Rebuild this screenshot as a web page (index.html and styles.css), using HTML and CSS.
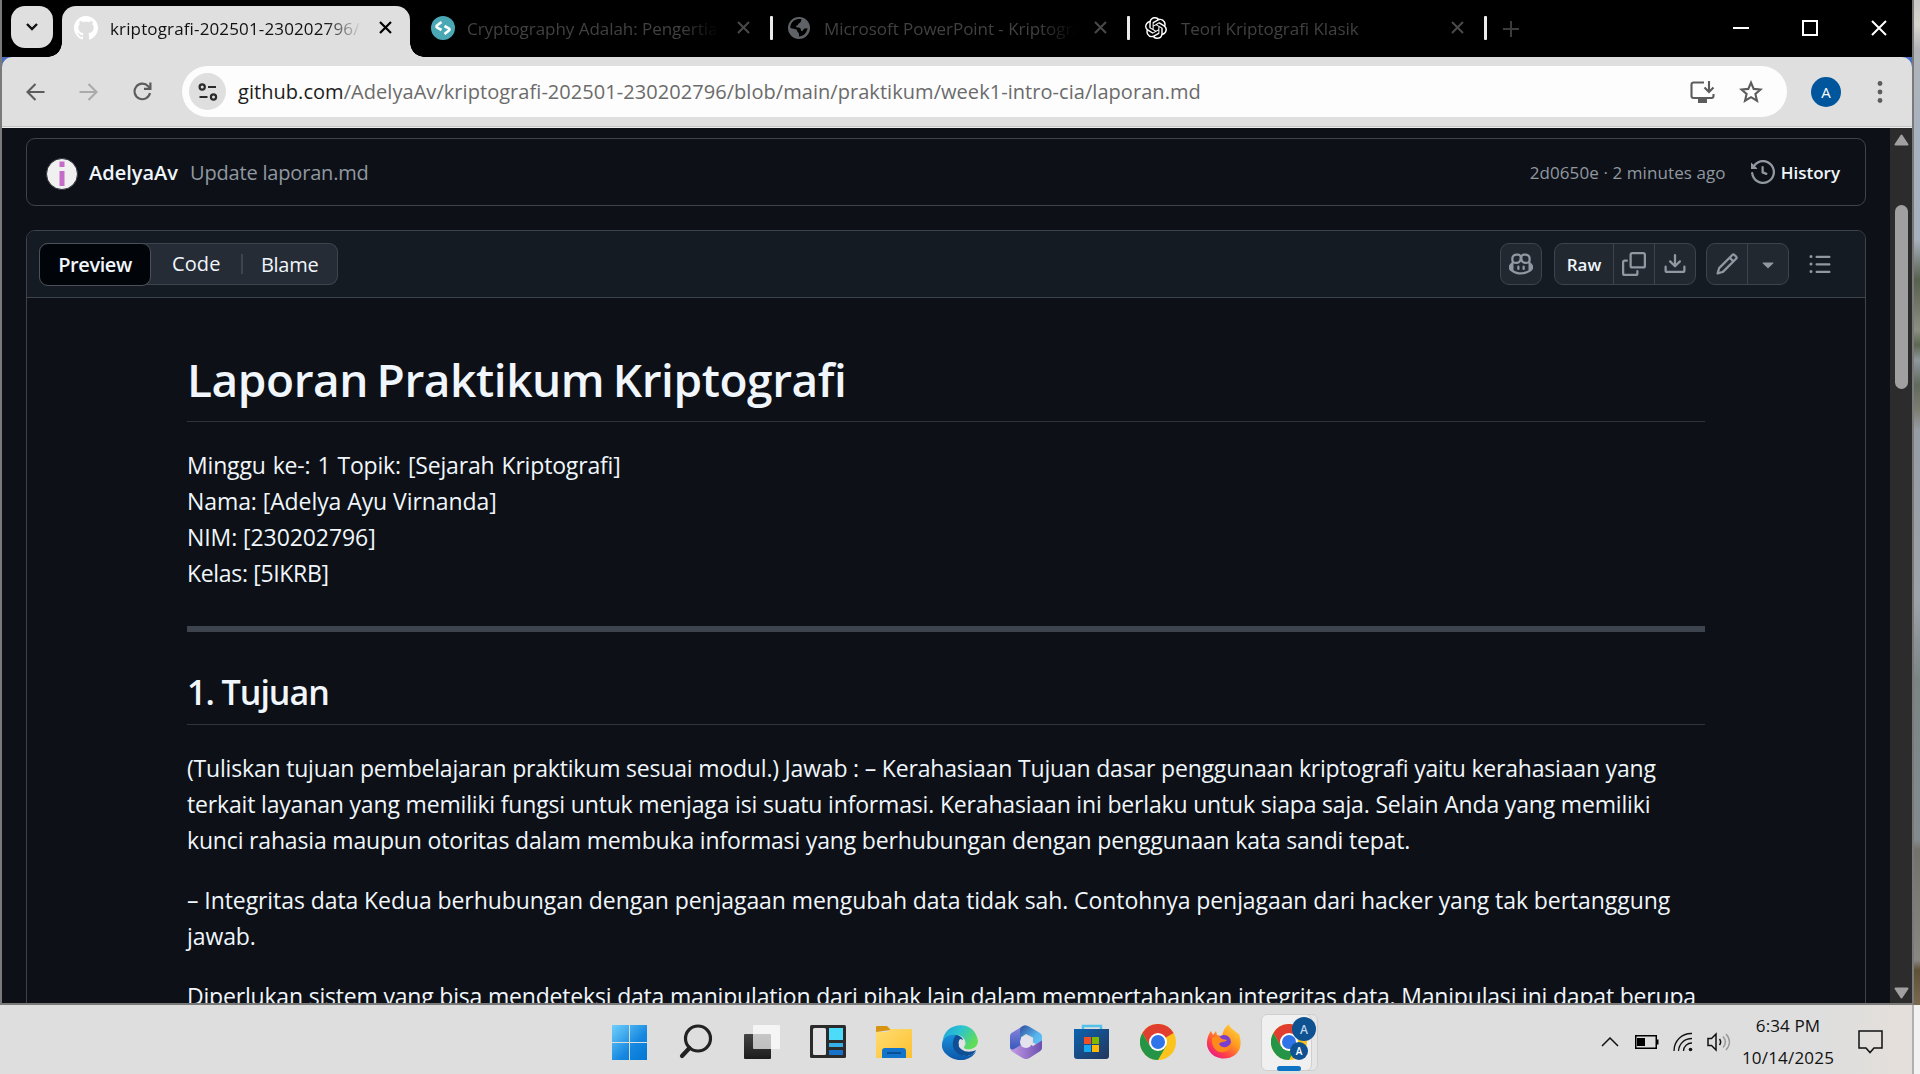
FILE: index.html
```html
<!DOCTYPE html>
<html lang="id">
<head>
<meta charset="utf-8">
<title>laporan.md</title>
<link rel="stylesheet" href="styles.css">
</head>
<body>
<div class="screen">
<div class="upper">
<main class="window">
  <header class="tabstrip">
    <button class="tab-search"><svg width="14" height="10" viewBox="0 0 14 10"><path d="M2 2l5 5 5-5" fill="none" stroke="#111" stroke-width="2.4"/></svg></button>
    <div class="tab active">
      <svg class="fav" width="24" height="24" viewBox="0 0 16 16"><path fill="#fff" d="M8 0C3.58 0 0 3.58 0 8c0 3.54 2.29 6.53 5.47 7.59.4.07.55-.17.55-.38 0-.19-.01-.82-.01-1.49-2.01.37-2.53-.49-2.69-.94-.09-.23-.48-.94-.82-1.13-.28-.15-.68-.52-.01-.53.63-.01 1.08.58 1.23.82.72 1.21 1.87.87 2.33.66.07-.52.28-.87.51-1.07-1.78-.2-3.64-.89-3.64-3.95 0-.87.31-1.59.82-2.15-.08-.2-.36-1.02.08-2.12 0 0 .67-.21 2.2.82.64-.18 1.32-.27 2-.27s1.36.09 2 .27c1.53-1.04 2.2-.82 2.2-.82.44 1.1.16 1.92.08 2.12.51.56.82 1.27.82 2.15 0 3.07-1.87 3.75-3.65 3.95.29.25.54.73.54 1.48 0 1.07-.01 1.93-.01 2.2 0 .21.15.46.55.38A8.01 8.01 0 0 0 16 8c0-4.42-3.58-8-8-8Z"/></svg>
      <span class="tab-title">kriptografi-202501-230202796/</span>
      <svg class="close" width="13" height="13" viewBox="0 0 13 13"><path d="M1 1l11 11M12 1L1 12" stroke="#000" stroke-width="2.2"/></svg>
    </div>
    <div class="tab">
      <svg class="fav" width="24" height="24" viewBox="0 0 24 24"><circle cx="12" cy="12" r="12" fill="#49a8b4"/><path d="M10.500 6L6 9.600c-.9.700-.6 1.500.3 2l4.200 2.400M13.500 18l4.500-3.600c.9-.7.6-1.500-.3-2L13.500 10" fill="none" stroke="#fff" stroke-width="2.600"/></svg>
      <span class="tab-title">Cryptography Adalah: Pengertian</span>
      <svg class="close" width="13" height="13" viewBox="0 0 13 13"><path d="M1 1l11 11M12 1L1 12" stroke="#4a4a4a" stroke-width="2"/></svg>
      <i class="sep"></i>
    </div>
    <div class="tab">
      <svg class="fav" width="22" height="22" viewBox="0 0 22 22"><circle cx="11" cy="11" r="11" fill="#5f6368"/><path d="M9 2.200c2.500-.5 4.500 0 4.500 0l-.6 2.300c-.4 1.500-2.300 1.300-2.600 2.800-.3 1.400-2.300.9-2.300 2.300 0 1.300 3.400.7 4.300 1.600 1 1 .1 2.700 1.500 3 1.300.2 1.200-2.500 3-2.700l2.800-.2c-.6 4.200-4 8.200-8.600 8.200v-2.300c0-1.800-1.800-1.300-1.800-3.100 0-1.500-1.200-2-2.700-2.200L2.300 11C2.300 6.500 5 3 9 2.200Z" fill="#000"/></svg>
      <span class="tab-title">Microsoft PowerPoint - Kriptografi</span>
      <svg class="close" width="13" height="13" viewBox="0 0 13 13"><path d="M1 1l11 11M12 1L1 12" stroke="#4a4a4a" stroke-width="2"/></svg>
      <i class="sep"></i>
    </div>
    <div class="tab">
      <svg class="fav" width="22" height="22" viewBox="0 0 24 24"><path fill="#fff" d="M22.282 9.821a5.985 5.985 0 0 0-.516-4.910 6.046 6.046 0 0 0-6.510-2.900A6.065 6.065 0 0 0 4.981 4.182a5.985 5.985 0 0 0-3.998 2.900 6.046 6.046 0 0 0 .743 7.097 5.980 5.980 0 0 0 .510 4.911 6.051 6.051 0 0 0 6.515 2.900A5.985 5.985 0 0 0 13.260 24a6.056 6.056 0 0 0 5.772-4.206 5.990 5.990 0 0 0 3.997-2.900 6.056 6.056 0 0 0-.747-7.073zM13.260 22.430a4.476 4.476 0 0 1-2.876-1.040l.141-.081 4.779-2.758a.795.795 0 0 0 .392-.681v-6.737l2.020 1.168a.071.071 0 0 1 .038.052v5.583a4.504 4.504 0 0 1-4.494 4.494zM3.600 18.304a4.470 4.470 0 0 1-.535-3.014l.142.085 4.783 2.759a.771.771 0 0 0 .780 0l5.843-3.369v2.332a.080.080 0 0 1-.033.062L9.740 19.950a4.500 4.500 0 0 1-6.140-1.646zM2.340 7.896a4.485 4.485 0 0 1 2.366-1.973V11.600a.766.766 0 0 0 .388.676l5.815 3.355-2.020 1.168a.076.076 0 0 1-.071 0l-4.830-2.786A4.504 4.504 0 0 1 2.340 7.872zm16.597 3.855l-5.833-3.387L15.119 7.200a.076.076 0 0 1 .071 0l4.830 2.791a4.494 4.494 0 0 1-.676 8.105v-5.678a.790.790 0 0 0-.407-.667zm2.010-3.023l-.141-.085-4.774-2.782a.776.776 0 0 0-.785 0L9.409 9.230V6.897a.066.066 0 0 1 .028-.061l4.830-2.787a4.500 4.500 0 0 1 6.680 4.660zM8.307 12.863l-2.020-1.164a.080.080 0 0 1-.038-.057V6.075a4.500 4.500 0 0 1 7.375-3.453l-.142.080-4.778 2.758a.795.795 0 0 0-.393.681zm1.097-2.365l2.602-1.500 2.607 1.500v2.999l-2.597 1.500-2.607-1.500z"/></svg>
      <span class="tab-title">Teori Kriptografi Klasik</span>
      <svg class="close" width="13" height="13" viewBox="0 0 13 13"><path d="M1 1l11 11M12 1L1 12" stroke="#4a4a4a" stroke-width="2"/></svg>
      <i class="sep"></i>
    </div>
    <svg class="newtab" width="16" height="16" viewBox="0 0 16 16"><path d="M8 0v16M0 8h16" stroke="#3c3c3c" stroke-width="2"/></svg>
    <div class="controls">
      <svg width="16" height="16" viewBox="0 0 16 16"><path d="M0 8h16" stroke="#fff" stroke-width="2"/></svg>
      <svg width="16" height="16" viewBox="0 0 16 16"><rect x="1" y="1" width="14" height="14" fill="none" stroke="#fff" stroke-width="2"/></svg>
      <svg width="16" height="16" viewBox="0 0 16 16"><path d="M1 1l14 14M15 1L1 15" stroke="#fff" stroke-width="2"/></svg>
    </div>
  </header>

  <div class="toolbar-back">
  <nav class="toolbar">
    <svg width="19" height="18" viewBox="0 0 19 18"><path d="M9.500 1L1.500 9l8 8M1.500 9H18.500" fill="none" stroke="#5c5c5c" stroke-width="2.100"/></svg>
    <svg class="fwd" width="19" height="18" viewBox="0 0 19 18"><path d="M9.500 1l8 8-8 8M17.500 9H.5" fill="none" stroke="#aaa" stroke-width="2.100"/></svg>
    <svg class="reload" width="19" height="19" viewBox="0 0 19 19"><path d="M17 11a7.800 7.800 0 1 1-1.800-6.800L17 6" fill="none" stroke="#5c5c5c" stroke-width="2.100"/><path d="M18.500.5v7.500H11V5.800h5.300V.5z" fill="#5c5c5c"/></svg>
    <div class="omnibox">
      <span class="siteinfo"><svg width="20" height="18" viewBox="0 0 20 18" fill="none" stroke="#2b2b2b" stroke-width="2.200"><circle cx="4.200" cy="4" r="2.600"/><path d="M10 4h8M1.500 14h8"/><circle cx="15.500" cy="14" r="2.600"/></svg></span>
      <span class="url"><b>github.com</b>/AdelyaAv/kriptografi-202501-230202796/blob/main/praktikum/week1-intro-cia/laporan.md</span>
      <svg class="install" width="26" height="22" viewBox="0 0 26 22" fill="none" stroke="#5c5c5c" stroke-width="2.100"><path d="M14 1.500H3.500a2 2 0 0 0-2 2v11.500a2 2 0 0 0 2 2h18a2 2 0 0 0 2-2v-2M19 0v11M14.500 6.500l4.500 4.500 4.500-4.500"/><path d="M8 20h9" stroke-width="4"/></svg>
      <svg width="24" height="23" viewBox="0 0 24 23"><path d="M12 2.600l2.700 6.300 6.900.6-5.200 4.500 1.600 6.700-6-3.600-6 3.600L7.600 14 2.400 9.500l6.900-.6z" fill="none" stroke="#5c5c5c" stroke-width="2.100"/></svg>
    </div>
    <span class="profile">A</span>
    <svg width="6" height="22" viewBox="0 0 6 22" fill="#5c5c5c"><circle cx="3" cy="2.500" r="2.400"/><circle cx="3" cy="11" r="2.400"/><circle cx="3" cy="19.500" r="2.400"/></svg>
  </nav>
  </div>

  <div class="viewport">
    <div class="page">
      <section class="commit">
        <svg class="avatar" width="32" height="32" viewBox="0 0 32 32"><circle cx="16" cy="16" r="15.500" fill="#f0f0f0" stroke="#30353c"/><path d="M13.500 3.500h5v5.500h-5zM13.500 13h5v15h-5z" fill="#c56cc8"/></svg>
        <strong>AdelyaAv</strong>
        <span class="message">Update laporan.md</span>
        <span class="sha">2d0650e · 2 minutes ago</span>
        <svg width="24" height="24" viewBox="0 0 16 16" fill="#9198a1"><path d="m.427 1.927 1.215 1.215a8.002 8.002 0 1 1-1.600 5.685.75.75 0 1 1 1.493-.154 6.500 6.500 0 1 0 1.180-4.458l1.358 1.358A.25.25 0 0 1 3.896 6H.25A.25.25 0 0 1 0 5.750V2.104a.25.25 0 0 1 .427-.177ZM7.750 4a.75.75 0 0 1 .75.75v2.992l2.028.812a.75.75 0 0 1-.557 1.392l-2.500-1A.751.751 0 0 1 7 8.250v-3.500A.75.75 0 0 1 7.750 4Z"/></svg>
        <strong class="history">History</strong>
      </section>

      <section class="blob">
        <div class="blob-head">
          <div class="segmented"><span class="seg selected">Preview</span><span class="seg code">Code</span><span class="seg blame">Blame</span></div>
          <div class="actions">
            <div class="group copilot"><span class="btn"><svg width="24" height="24" viewBox="0 0 16 16"><path d="M7.998 15.035c-4.562 0-7.873-2.914-7.998-3.749V9.338c.085-.628.677-1.686 1.588-2.065.013-.07.024-.143.036-.218.029-.183.06-.384.126-.612-.201-.508-.254-1.084-.254-1.656 0-.87.128-1.769.693-2.484.579-.733 1.494-1.124 2.724-1.261 1.206-.134 2.262.034 2.944.765.05.053.096.108.139.165.044-.057.094-.112.143-.165.682-.731 1.738-.899 2.944-.765 1.230.137 2.145.528 2.724 1.261.566.715.693 1.614.693 2.484 0 .572-.053 1.148-.254 1.656.066.228.098.429.126.612.012.076.024.148.037.218.924.385 1.522 1.471 1.591 2.095v1.872c0 .766-3.351 3.795-8.002 3.795Zm0-1.485c2.280 0 4.584-1.110 5.002-1.433V7.862l-.023-.116c-.49.21-1.075.291-1.727.291-1.146 0-2.059-.327-2.710-.991A3.222 3.222 0 0 1 8 6.303a3.240 3.240 0 0 1-.544.743c-.65.664-1.563.991-2.710.991-.652 0-1.236-.081-1.727-.291l-.023.116v4.255c.419.323 2.722 1.433 5.002 1.433ZM6.762 2.830c-.193-.206-.637-.413-1.682-.297-1.019.113-1.479.404-1.713.7-.247.312-.369.789-.369 1.554 0 .793.129 1.171.308 1.371.162.181.519.379 1.442.379.853 0 1.339-.235 1.638-.54.315-.322.527-.827.617-1.553.117-.935-.037-1.395-.241-1.614Zm4.155-.297c-1.044-.116-1.488.091-1.681.297-.204.219-.359.679-.242 1.614.091.726.303 1.231.618 1.553.299.305.784.54 1.638.54.922 0 1.280-.198 1.442-.379.179-.2.308-.578.308-1.371 0-.765-.123-1.242-.370-1.554-.233-.296-.693-.587-1.713-.7ZM6.250 9.037a.75.75 0 0 1 .75.75v1.501a.75.75 0 0 1-1.500 0V9.787a.75.75 0 0 1 .75-.75Zm4.250.75v1.501a.75.75 0 0 1-1.500 0V9.787a.75.75 0 0 1 1.500 0Z"/></svg></span></div>
            <div class="group raw"><span class="btn raw-btn">Raw</span><span class="btn"><svg width="24" height="24" viewBox="0 0 16 16"><path d="M0 6.750C0 5.784.784 5 1.750 5h1.500a.75.75 0 0 1 0 1.500h-1.500a.25.25 0 0 0-.25.25v7.500c0 .138.112.25.25.25h7.500a.25.25 0 0 0 .25-.25v-1.500a.75.75 0 0 1 1.500 0v1.500A1.750 1.750 0 0 1 9.250 16h-7.500A1.750 1.750 0 0 1 0 14.250ZM5 1.750C5 .784 5.784 0 6.750 0h7.500C15.216 0 16 .784 16 1.750v7.500A1.750 1.750 0 0 1 14.250 11h-7.500A1.750 1.750 0 0 1 5 9.250Zm1.750-.25a.25.25 0 0 0-.25.25v7.500c0 .138.112.25.25.25h7.500a.25.25 0 0 0 .25-.25v-7.500a.25.25 0 0 0-.25-.25Z"/></svg></span><span class="btn"><svg width="24" height="24" viewBox="0 0 16 16"><path d="M2.750 14A1.750 1.750 0 0 1 1 12.250v-2.500a.75.75 0 0 1 1.500 0v2.500c0 .138.112.25.25.25h10.500a.25.25 0 0 0 .25-.25v-2.500a.75.75 0 0 1 1.500 0v2.500A1.750 1.750 0 0 1 13.250 14ZM7.250 7.689V2a.75.75 0 0 1 1.500 0v5.689l1.970-1.969a.749.749 0 1 1 1.060 1.060l-3.250 3.250a.749.749 0 0 1-1.060 0L4.220 6.780a.749.749 0 1 1 1.060-1.060Z"/></svg></span></div>
            <div class="group edit"><span class="btn"><svg width="24" height="24" viewBox="0 0 16 16"><path d="M11.013 1.427a1.750 1.750 0 0 1 2.474 0l1.086 1.086a1.750 1.750 0 0 1 0 2.474l-8.610 8.610c-.21.21-.47.364-.756.445l-3.251.93a.75.75 0 0 1-.927-.928l.929-3.250c.081-.286.235-.547.445-.758l8.610-8.610Zm.176 4.823L9.750 4.810l-6.286 6.287a.253.253 0 0 0-.064.108l-.558 1.953 1.953-.558a.253.253 0 0 0 .108-.064Zm1.238-3.763a.25.25 0 0 0-.354 0L10.811 3.750l1.439 1.440 1.263-1.263a.25.25 0 0 0 0-.354Z"/></svg></span><span class="btn"><svg width="24" height="24" viewBox="0 0 16 16"><path d="m4.427 7.427 3.396 3.396a.25.25 0 0 0 .354 0l3.396-3.396A.25.25 0 0 0 11.396 7H4.604a.25.25 0 0 0-.177.427Z"/></svg></span></div>
            <svg class="outline" width="24" height="24" viewBox="0 0 16 16"><path d="M5.750 2.500h8.500a.75.75 0 0 1 0 1.500h-8.500a.75.75 0 0 1 0-1.500Zm0 5h8.500a.75.75 0 0 1 0 1.500h-8.500a.75.75 0 0 1 0-1.500Zm0 5h8.500a.75.75 0 0 1 0 1.500h-8.500a.75.75 0 0 1 0-1.500ZM2 14a1 1 0 1 1 0-2 1 1 0 0 1 0 2Zm1-6a1 1 0 1 1-2 0 1 1 0 0 1 2 0ZM2 4a1 1 0 1 1 0-2 1 1 0 0 1 0 2Z"/></svg>
          </div>
        </div>
        <article class="markdown">
          <h1>Laporan Praktikum Kriptografi</h1>
          <p class="meta"><span class="topic">Minggu ke-: 1 Topik: [Sejarah Kriptografi]</span><br>Nama: [Adelya Ayu Virnanda]<br>NIM: [230202796]<br><span class="kelas">Kelas: [5IKRB]</span></p>
          <hr>
          <h2>1. Tujuan</h2>
          <p>(Tuliskan tujuan pembelajaran praktikum sesuai modul.) Jawab : – Kerahasiaan Tujuan dasar penggunaan kriptografi yaitu kerahasiaan yang<br><span class="loose">terkait layanan yang memiliki fungsi untuk menjaga isi suatu informasi. Kerahasiaan ini berlaku untuk siapa saja. Selain Anda yang memiliki<br>kunci rahasia maupun otoritas dalam membuka informasi yang berhubungan dengan penggunaan kata sandi tepat.</span></p>
          <p class="wide">– Integritas data Kedua berhubungan dengan penjagaan mengubah data tidak sah. Contohnya penjagaan dari hacker yang tak bertanggung<br>jawab.</p>
          <p>Diperlukan sistem yang bisa mendeteksi data manipulation dari pihak lain dalam mempertahankan integritas data. Manipulasi ini dapat berupa</p>
        </article>
      </section>
    </div>
    <div class="scrollbar">
      <svg width="15" height="12" viewBox="0 0 15 12"><path d="M7.500 1.500L13.500 10.500H1.500z" fill="#a0a0a0" stroke="#a0a0a0" stroke-width="2" stroke-linejoin="round"/></svg>
      <i class="thumb"></i>
      <svg class="down" width="15" height="12" viewBox="0 0 15 12"><path d="M7.500 10.500L1.500 1.500h12z" fill="#a0a0a0" stroke="#a0a0a0" stroke-width="2" stroke-linejoin="round"/></svg>
    </div>
  </div>
</main>
<div class="wallpaper"></div>
</div>

<footer class="taskbar">
  <svg width="0" height="0" class="defs"><defs>
    <linearGradient id="win" x1="0" y1="0" x2="1" y2="1"><stop offset="0" stop-color="#6fd0fb"/><stop offset=".6" stop-color="#1687e0"/><stop offset="1" stop-color="#0078d4"/></linearGradient>
    <linearGradient id="dark" x1="0" y1="0" x2="0" y2="1"><stop offset="0" stop-color="#444"/><stop offset="1" stop-color="#1c1c1c"/></linearGradient>
    <linearGradient id="folder" x1="0" y1="0" x2="1" y2="1"><stop offset="0" stop-color="#ffdd73"/><stop offset="1" stop-color="#fdc02f"/></linearGradient>
    <linearGradient id="edgeTop" x1="0" y1="0" x2="1" y2=".5"><stop offset="0" stop-color="#1f9fdd"/><stop offset=".5" stop-color="#2cc4cf"/><stop offset="1" stop-color="#5fdc58"/></linearGradient>
    <linearGradient id="edgeLow" x1="0" y1="0" x2="0" y2="1"><stop offset="0" stop-color="#1890dc"/><stop offset="1" stop-color="#0c56a8"/></linearGradient>
    <linearGradient id="m1" x1="0" y1="0" x2="1" y2="1"><stop offset="0" stop-color="#2f4f9c"/><stop offset=".6" stop-color="#58b4ee"/><stop offset="1" stop-color="#63c9f5"/></linearGradient>
    <linearGradient id="m2" x1="0" y1="0" x2="0" y2="1"><stop offset="0" stop-color="#8f86e0"/><stop offset="1" stop-color="#2d56b8"/></linearGradient>
    <linearGradient id="m3" x1="0" y1="0" x2="1" y2="0"><stop offset="0" stop-color="#c49be6"/><stop offset="1" stop-color="#6b50b0"/></linearGradient>
    <linearGradient id="store" x1="0" y1="0" x2="1" y2="1"><stop offset="0" stop-color="#0b63b0"/><stop offset="1" stop-color="#24355c"/></linearGradient>
    <linearGradient id="fox" x1="1" y1="0" x2=".2" y2="1"><stop offset="0" stop-color="#ffe14a"/><stop offset=".45" stop-color="#ff9a1f"/><stop offset=".75" stop-color="#ff4346"/><stop offset="1" stop-color="#e8158d"/></linearGradient>
    <symbol id="chrome" viewBox="0 0 36 36"><circle cx="18" cy="18" r="18" fill="#fcc31d"/><path d="M18 18L10.200 22.500 2.400 9A18 18 0 0 1 33.600 9z" fill="#e03e2f"/><path d="M18 18l7.800 4.500L18 36A18 18 0 0 1 2.400 9l7.800 13.500z" fill="#249447"/><circle cx="18" cy="18" r="9" fill="#fff"/><circle cx="18" cy="18" r="7" fill="#2f74e8"/></symbol>
  </defs></svg>
  <div class="apps">
    <span><svg width="36" height="36" viewBox="0 0 36 36"><path d="M0 1h17v17H0zM18 1h17v17H18zM0 19h17v17H0zM18 19h17v17H18z" fill="url(#win)"/></svg></span>
    <span><svg width="34" height="36" viewBox="0 0 34 36"><circle cx="19" cy="14.500" r="12.500" fill="none" stroke="#222" stroke-width="3.200"/><path d="M10.500 24L3 32" stroke="#222" stroke-width="4.200" stroke-linecap="round"/></svg></span>
    <span><svg width="36" height="36" viewBox="0 0 36 36"><rect x="0" y="10" width="27" height="25" rx="1" fill="url(#dark)"/><rect x="9" y="1" width="27" height="24" rx="1" fill="#fff" fill-opacity=".7"/></svg></span>
    <span><svg width="36" height="34" viewBox="0 0 36 34"><rect width="36" height="33" rx="1.500" fill="#2b2b2b"/><rect x="3" y="3" width="13" height="27" rx="1.500" fill="#e2e2e5"/><path d="M19 3h14v12H19z" fill="#4cdcfa"/><path d="M19 18h14v4H19z" fill="#36aee8"/><path d="M19 25h14v5H19z" fill="#1672c8"/></svg></span>
    <span><svg width="36" height="34" viewBox="0 0 36 34"><path d="M0 7V2q0-1 1-1h10l4 4z" fill="#d89410"/><path d="M0 7h11l4-3h20q1 0 1 1v28H0z" fill="url(#folder)"/><path d="M6 33v-7q0-3 3-3h18q3 0 3 3v7z" fill="#1173ca"/><path d="M11 28h14" stroke="#0a4f92" stroke-width="2"/></svg></span>
    <span><svg width="36" height="36" viewBox="0 0 36 36"><path d="M1 15C4-2 32-5 35.800 16c1 7-6 10.500-12 9-2.500-.6-2-2-.8-3.500C25 17 21 11 14 11 7 11 2 15 0 20z" fill="url(#edgeTop)"/><path d="M0 20C1 13 8 10 14 11c4 .7 6 2.500 7 4.500-9-1-10 14 1 16 5 1 9-1 12-4C30 35 20 38 12 35 4 32-1 26 0 20z" fill="url(#edgeLow)"/><path d="M14 11c4 .7 7 3 7 6-4 1-6 5-2 8 5 4 11 3 15 1-2 5-8 7-14 5.500C11 29 8 19 14 11z" fill="#0f4f96"/><path d="M18 15c3 0 5 3 4 6-1 2-1.500 3 1 4-6-1-8-6-5-10z" fill="#e0e4e6"/></svg></span>
    <span><svg width="34" height="36" viewBox="0 0 34 36"><path d="M2.500 9L13 2.500q3-2 4.500-1L12 6v19l-6 3-3.500-2Q1 25 1 23V12q0-2 1.500-3z" fill="url(#m2)"/><path d="M13 2.500q3.500-2 7 0L31 9q2 1 2 3.500V23l-9-4.500v-5L17 10l-6 4V5.500q0-1.500 2-3z" fill="url(#m1)"/><path d="M1.500 24.500q1.500 1.500 3.500.5l12-7 7 4 9-5.500V24q0 2-2 3.200L20.500 34q-3.500 2-7 0L3 27.500q-1.500-1-1.500-3z" fill="url(#m3)"/><circle cx="17" cy="18" r="6" fill="#e4e2ec"/></svg></span>
    <span><svg width="36" height="36" viewBox="0 0 36 36"><path d="M9 7V2h18v5" fill="none" stroke="#52c2ea" stroke-width="2.400"/><path d="M0 5h35v27q0 3-3 3H3q-3 0-3-3z" fill="url(#store)"/><path d="M10 13h7v7h-7z" fill="#f25022"/><path d="M18 13h7v7h-7z" fill="#7fba00"/><path d="M10 21h7v7h-7z" fill="#18a8ef"/><path d="M18 21h7v7h-7z" fill="#ffb900"/></svg></span>
    <span><svg width="36" height="36"><use href="#chrome"/></svg></span>
    <span><svg width="36" height="36" viewBox="0 0 36 36"><path d="M1 20C1 13 3 10 5 7l2 4 3-4 1 4 5 1c1-5 3-9 7-12 0 4 6 6 8 9l2 1c3 9 2 16-4 21-8 6-20 4-25-3-2-3-3-5-3-8z" fill="url(#fox)"/><circle cx="18" cy="18" r="7" fill="#7a3fd0"/><path d="M6 14c3-3 8-2 10 1l5 1c-3 3-6 1-8 4 3 5 9 4 12-1 1 7-6 10-11 9-5-1-9-7-8-14z" fill="#ff8a1c"/></svg></span>
    <span class="running"><i class="stack"></i><i class="tile"><svg width="36" height="36"><use href="#chrome"/></svg><b class="badge big">A</b><b class="badge small">A</b></i></span>
  </div>
  <div class="tray">
    <svg width="18" height="10" viewBox="0 0 18 10"><path d="M1 9l8-8 8 8" fill="none" stroke="#111" stroke-width="1.500"/></svg>
    <svg class="battery" width="24" height="14" viewBox="0 0 24 14"><rect x=".75" y=".75" width="20.500" height="12.500" fill="none" stroke="#000" stroke-width="1.500"/><path d="M2 3h8v8H2zM22 4.500h1.500v5H22z"/></svg>
    <svg class="wifi" width="20" height="20" viewBox="0 0 20 20" fill="none" stroke="#111" stroke-width="1.300"><path d="M1 19C1 9 9 1 19 1.500M5.500 19C6 11.500 11.500 6.500 19 6.500M10.500 19c0-4.500 4-8 8.500-8"/><circle cx="17.500" cy="17.500" r="1.800" fill="#111" stroke="none"/></svg>
    <svg class="sound" width="24" height="20" viewBox="0 0 24 20" fill="none" stroke="#111" stroke-width="1.500"><path d="M1 6.500h3.500L9 2v16l-4.500-4.500H1zM12.500 7c1.500 2 1.500 4 0 6"/><path d="M16 4.500c3 3.500 3 7.500 0 11M19 2c4.500 5 4.500 11 0 16" stroke="#999"/></svg>
    <div class="clock"><span>6:34 PM</span><span class="date">10/14/2025</span></div>
    <svg class="notif" width="25" height="24" viewBox="0 0 25 24"><path d="M1 1h23v17h-8l-4 4.500L8 18H1z" fill="none" stroke="#111" stroke-width="1.500"/></svg>
  </div>
</footer>
</div>
</body>
</html>
```
FILE: styles.css
```css
* { box-sizing: border-box; }
body {
  margin: 0;
  font-family: "Open Sans", "Noto Sans", sans-serif;
  background: #0d1117;
}
svg { display: block; flex: none; }
.screen { width: 1920px; height: 1074px; overflow: hidden; display: flex; flex-direction: column; }
.upper { display: flex; height: 1005px; flex: none; }
.window {
  width: 1914px;
  border: solid #7a7a7a;
  border-width: 0 2px 2px;
  display: flex;
  flex-direction: column;
}
.wallpaper {
  flex: 1;
  background: linear-gradient(#c9c9c7 0, #d8d4cd 25px, #b0b4b8 50px, #a7b2bf 130px, #a6b0bc 240px, #58604e 280px, #8a8f82 330px, #5c6650 345px, #8e979c 360px, #616a5c 385px, #7d7d72 410px, #969ca3 430px, #9da2a8 600px, #7b8485 680px, #838b8e 840px, #74716c 850px, #8a8783 960px, #5f5138 970px, #78694f 1005px);
}

/* tab strip */
.tabstrip { display: flex; height: 57px; background: #000; padding: 0 25px 0 9px; align-items: center; flex: none; }
.tab-search {
  width: 42px; height: 42px; margin-top: -3px; padding: 0; border: 0; border-radius: 14px;
  background: #dfdfdf; display: flex; align-items: center; justify-content: center;
}
.tab { display: flex; align-items: center; width: 357px; height: 57px; padding-bottom: 2px; flex: none; }
.tab.active {
  position: relative; width: 348px; height: 51px; margin: 6px 21px 0 9px; padding: 0 18px 8px 12px;
  background: #dfdfdf; border-radius: 14px 14px 0 0;
}
.tab.active::before, .tab.active::after {
  content: ""; position: absolute; bottom: 0; width: 14px; height: 14px;
}
.tab.active::before { left: -14px; background: radial-gradient(circle at 0 0, transparent 13.5px, #dfdfdf 14px); }
.tab.active::after { right: -14px; background: radial-gradient(circle at 100% 0, transparent 13.5px, #dfdfdf 14px); }
.fav { margin-right: 12px; }
.tab-title {
  width: 252px; height: 28px; line-height: 28px; padding-top: 1px; font-size: 17px; letter-spacing: -.04px; white-space: nowrap; overflow: hidden; color: #414141;
  -webkit-mask-image: linear-gradient(90deg, #000 215px, transparent 252px);
  mask-image: linear-gradient(90deg, #000 215px, transparent 252px);
}
.active .tab-title { color: #111; letter-spacing: .14px; }
.tab .close { margin-left: 18px; }
.fav[width="22"] { margin: 0 14px 0 0; }
.sep { width: 3px; height: 24px; margin-left: 20px; background: #ececec; border-radius: 1px; }
.newtab { margin-left: 1px; }
.controls { display: flex; gap: 53px; margin-left: auto; padding-bottom: 1px; }

/* toolbar */
.toolbar-back { background: #4a6fc0; flex: none; }
.toolbar {
  display: flex; align-items: center; height: 71px; padding: 0 29px 1px 24px;
  background: #dfdfdf; border-bottom: 1px solid #ececec; border-radius: 10px 10px 0 0;
  box-shadow: inset 0 -1px #c6c6c6;
}
.fwd { margin-left: 34px; }
.reload { margin-left: 35px; }
.omnibox {
  display: flex; align-items: center; width: 1605px; height: 51px; margin-left: 30px;
  padding: 0 24px 0 7px; border-radius: 26px; background: #fdfdfd;
}
.siteinfo { display: flex; align-items: center; justify-content: center; width: 37px; height: 37px; border-radius: 50%; background: #dfdfdf; }
.url { flex: 1; margin-left: 12px; font-size: 20px; letter-spacing: .05px; color: #6b6b6b; white-space: nowrap; }
.url b { font-weight: 400; color: #1c1c1c; }
.install { margin-right: 23px; }
.profile {
  display: flex; align-items: center; justify-content: center; width: 30px; height: 30px;
  margin: 0 36px 0 24px; border-radius: 50%; background: #00569d; color: #fff; font-size: 15px;
}

/* page */
.viewport { display: flex; flex: 1; min-height: 0; background: #0d1117; }
.page { flex: 1; padding: 10px 24px 0; overflow: hidden; color: #f0f6fc; }
.commit {
  display: flex; align-items: center; height: 68px; padding: 0 25px 0 18px;
  border: 1px solid #3d444d; border-radius: 9px; font-size: 20px; white-space: nowrap;
}
.commit strong { font-weight: 600; }
.avatar { margin: 4px 11px 0 1px; }
.message { margin-left: 12px; color: #9198a1; letter-spacing: -.18px; }
.sha { margin: 0 25px 0 auto; font-size: 17px; letter-spacing: .09px; color: #9198a1; }
.history { margin-left: 6px; font-size: 17px; }
.blob { margin-top: 24px; height: 900px; border: 1px solid #3d444d; border-radius: 9px; }
.blob-head {
  display: flex; align-items: center; justify-content: space-between; height: 67px; padding: 0 33px 0 12px;
  background: #151b23; border-bottom: 1px solid #3d444d; border-radius: 8px 8px 0 0;
}
.segmented {
  display: flex; align-items: center; width: 299px; height: 42px; border-radius: 9px;
  background: #262c36; box-shadow: inset 0 0 0 1px #3d444d; font-size: 20px;
}
.seg { letter-spacing: -.3px; }
.selected {
  width: 112px; height: 43px; line-height: 41px; border: 1px solid #4a515a; border-radius: 9px; background: #010409;
  font-weight: 600; text-align: center; letter-spacing: -.4px;
}
.code { margin-left: 21px; width: 71px; letter-spacing: .1px; border-right: 2px solid #3d444d; line-height: 20px; }
.blame { margin-left: 18px; }
.actions { display: flex; align-items: center; fill: #9198a1; }
.group { display: flex; height: 42px; border: 1px solid #3d444d; border-radius: 9px; background: #212830; }
.btn { display: flex; align-items: center; justify-content: center; width: 40px; font-size: 17px; font-weight: 600; }
.btn + .btn { width: 41px; border-left: 1px solid #3d444d; }
.raw-btn { width: 58px; }
.raw { margin: 0 10px 0 12px; }
.outline { margin-left: 19px; }

.markdown { width: 1518px; margin: 51px 0 0 160px; font-size: 23px; line-height: 36px; letter-spacing: -.19px; white-space: nowrap; }
h1, h2 { font-weight: 600; border-bottom: 1px solid #2f353d; margin: 0 0 25px; }
h1 { height: 73px; font-size: 46px; line-height: 60px; letter-spacing: -.44px; word-spacing: -3px; }
h2 { height: 57px; margin-top: 36px; font-size: 34px; line-height: 49px; letter-spacing: -1px; }
p { margin: 0 0 24px; }
.meta { letter-spacing: -.08px; margin-bottom: 35px; }
.topic { letter-spacing: -.17px; word-spacing: 1.2px; }
.kelas { letter-spacing: -.33px; }
.loose { letter-spacing: -.17px; }
.wide { letter-spacing: -.08px; }
hr { height: 6px; margin: 0; border: 0; background: #3d444d; }

.scrollbar { display: flex; flex-direction: column; align-items: center; width: 22px; padding: 6px 0 4px; background: #2c2c2c; }
.thumb { width: 13px; height: 184px; margin-top: 59px; border-radius: 7px; background: #a0a0a0; }
.down { margin-top: auto; }

/* taskbar */
.taskbar { display: flex; flex: 1; background: linear-gradient(90deg, #dedede 1820px, #e4dfda 1912px, #b0b0b0 1912px, #b0b0b0 1914px, #f2f2f2 1914px); }
.defs { position: absolute; }
.apps { display: flex; padding-left: 597px; }
.apps > span { display: flex; width: 66px; height: 74px; align-items: center; justify-content: center; flex: none; }
.apps .running { position: relative; }
.stack, .tile { position: absolute; border: 1px solid #cfcfcf; border-radius: 6px; background: #f0f0f0; }
.stack { left: 10px; top: 9px; width: 51px; height: 57px; background: #e6e6e6; }
.tile { left: 4px; top: 9px; width: 51px; height: 57px; padding: 9px 0 0 9px; }
.tile::after { content: ""; position: absolute; left: 15px; bottom: -1px; width: 24px; height: 5px; border-radius: 3px; background: #0b72c4; }
.badge { position: absolute; display: flex; align-items: center; justify-content: center; border-radius: 50%; background: #0f5291; color: #fff; font-style: normal; font-weight: 600; }
.big { left: 30px; top: 2px; width: 24px; height: 24px; font-size: 12px; color: #bcd3ea; }
.small { left: 28px; top: 27px; width: 18px; height: 18px; font-size: 10px; }
.tray { display: flex; align-items: center; height: 74px; margin: 0 37px 0 auto; padding-bottom: 1px; }
.battery { margin-left: 16px; }
.wifi { margin-left: 14px; }
.sound { margin-left: 14px; }
.clock { display: flex; flex-direction: column; align-items: center; width: 94px; margin: 0 23px 0 10px; font-size: 17px; line-height: 32px; color: #111; letter-spacing: .1px; }
.date { letter-spacing: .2px; }
```
